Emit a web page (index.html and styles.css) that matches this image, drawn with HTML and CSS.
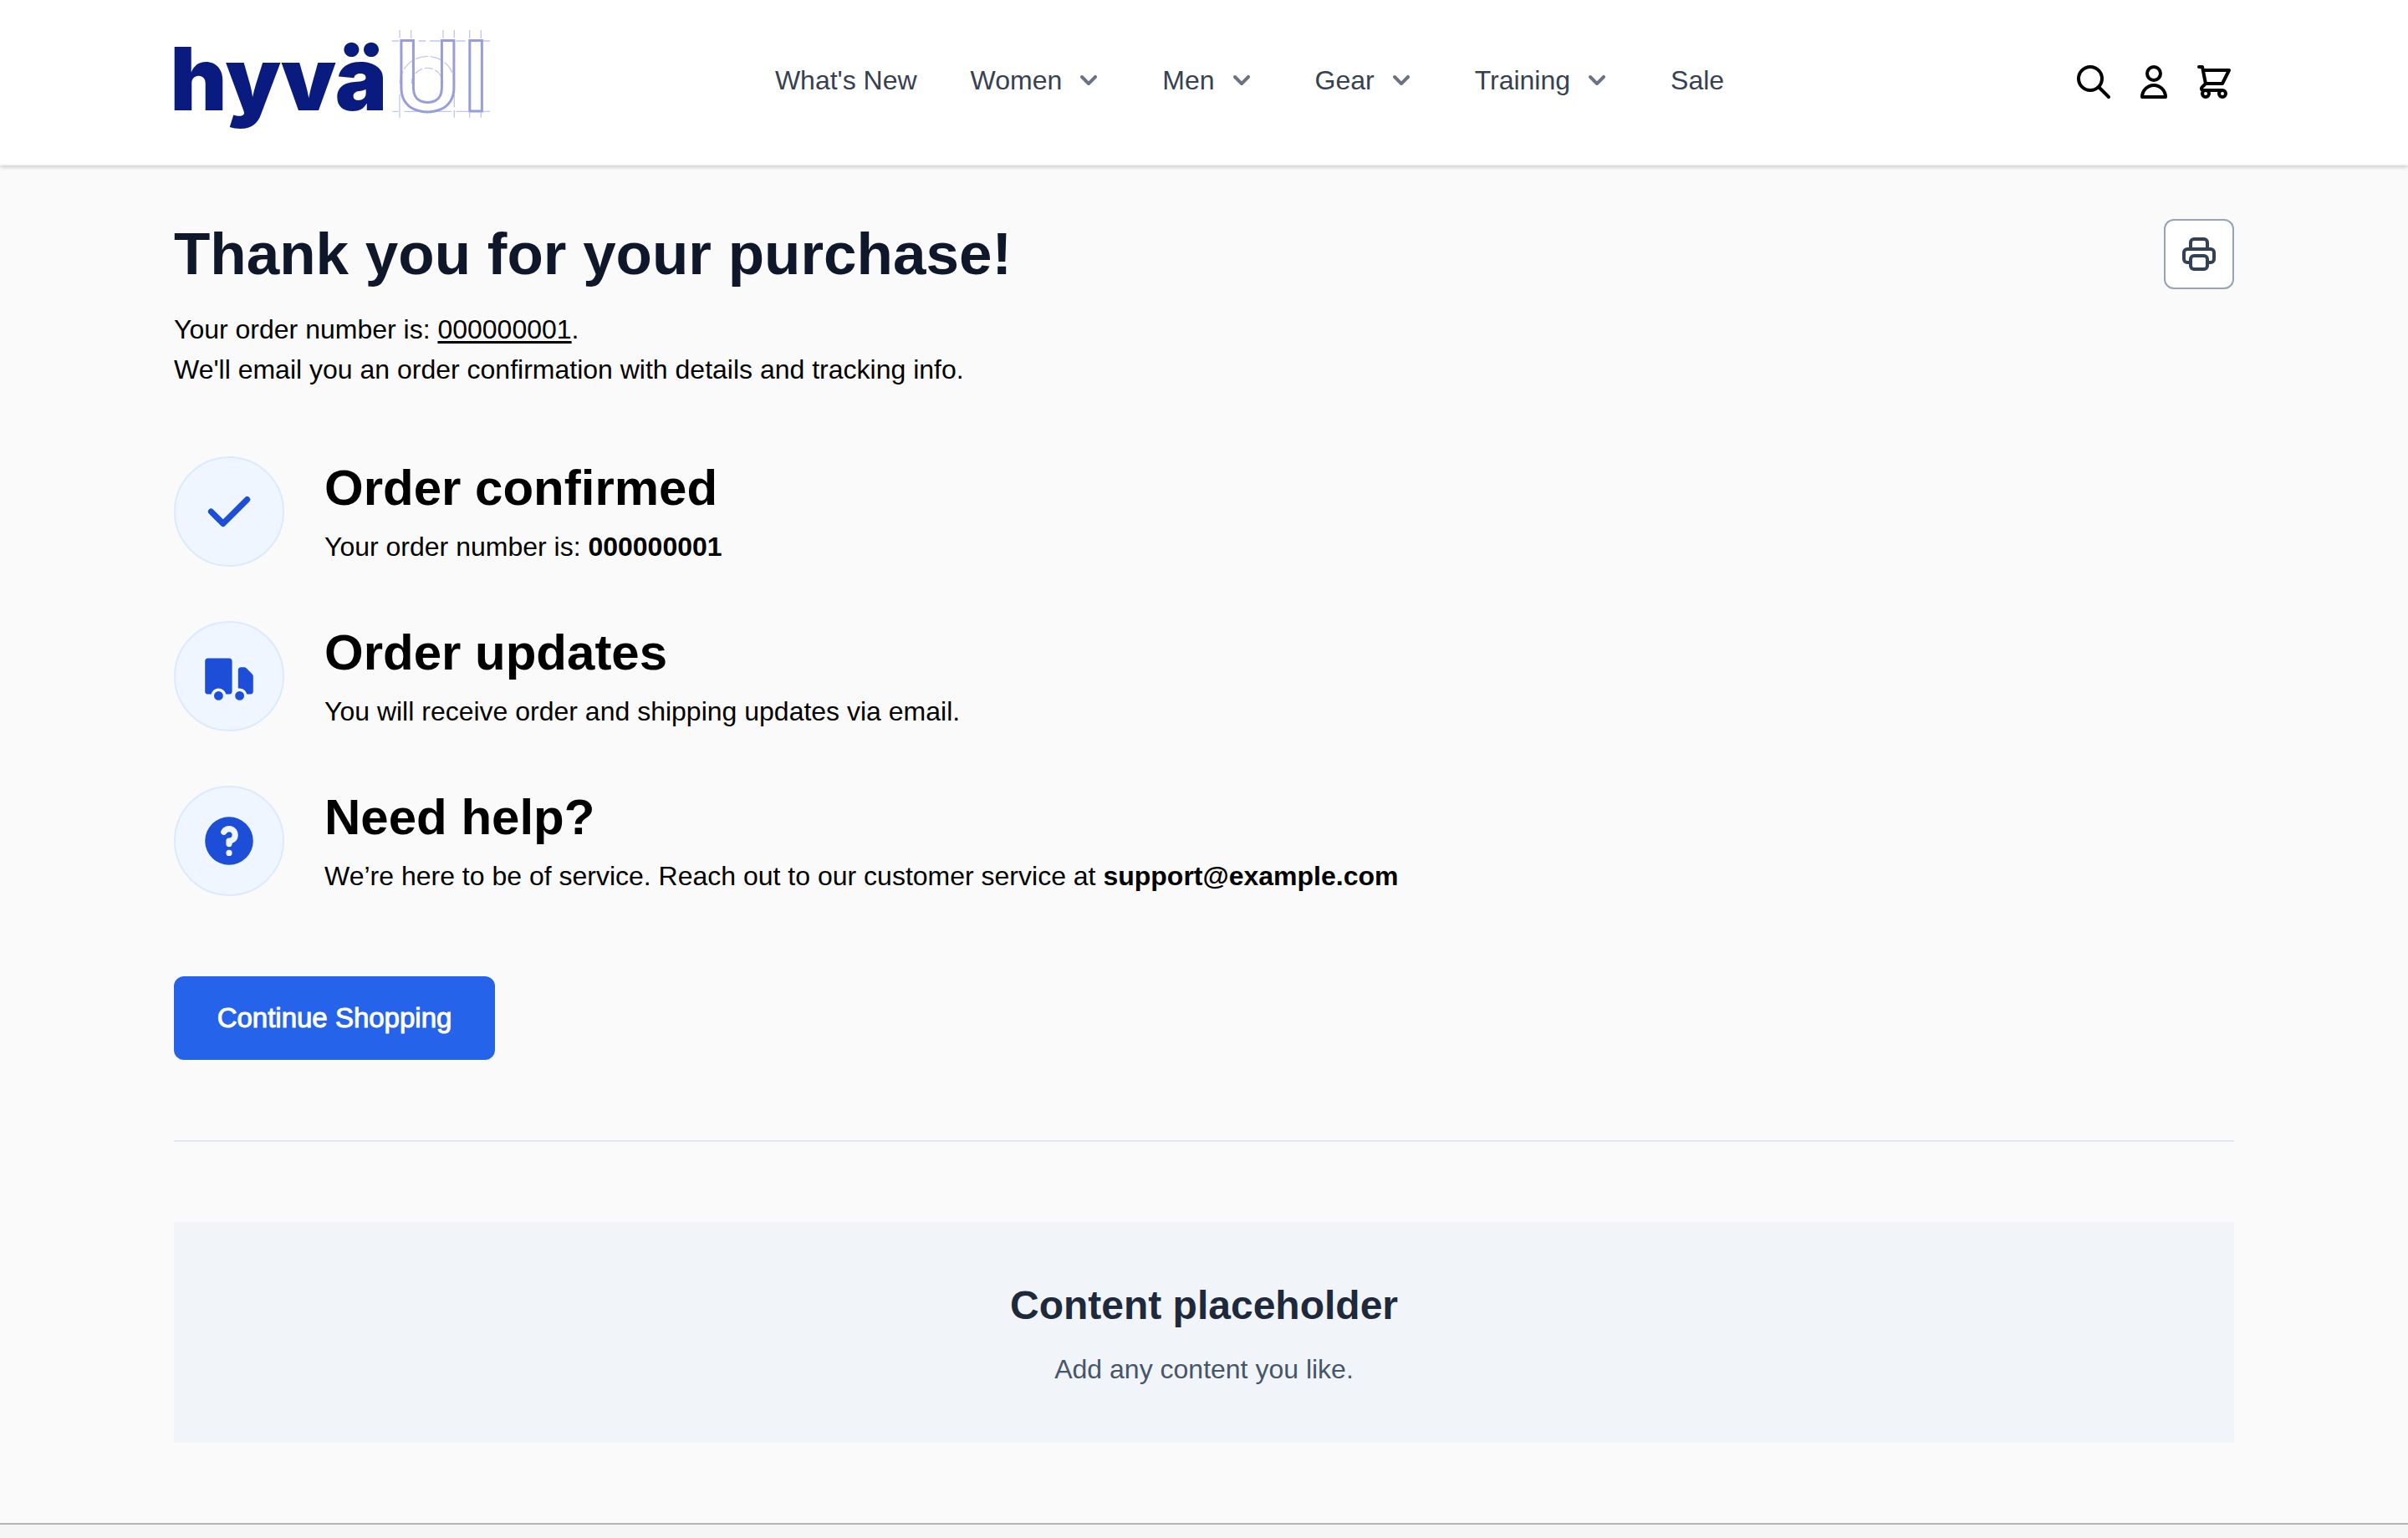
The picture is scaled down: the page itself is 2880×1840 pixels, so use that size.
FILE: index.html
```html
<!DOCTYPE html>
<html lang="en">
<head>
  <meta charset="utf-8">
  <meta name="viewport" content="width=device-width, initial-scale=1">
  <title>Thank you for your purchase!</title>
  <link rel="stylesheet" href="styles.css">
</head>
<body>
  <header class="site-header">
    <div class="container header-row">
      <a class="logo-link" href="#" aria-label="Hyvä UI home">
        <svg class="logo" viewBox="54 45 1134 378">
          <text class="logo-word" x="430" y="335">hyvä</text>
          <g class="logo-guides">
            <path d="M836 87H862M932 87H957M972 87H1010M1066 87H1100M1160 87H1188"/>
            <path d="M838 340H860M880 340H925M1000 340H1050M1066 340H1110M1160 340H1188"/>
            <path d="M864 48V76M905 48V78M1020 48V78M1060 48V76M1115 48V78M1156 48V78"/>
            <path d="M864 278V362M1060 278V325M1060 335V362M1115 345V362M1156 345V362"/>
            <path stroke-dasharray="46 9" d="M865 240A98 98 0 0 1 1061 240"/>
            <path stroke-dasharray="30 9" d="M907 240A56 56 0 0 1 1019 240"/>
          </g>
          <text class="logo-outline" x="964" y="340">U</text>
          <text class="logo-outline" x="1137" y="340">I</text>
        </svg>
      </a>
      <nav class="main-nav" aria-label="Main">
        <a href="#">What's New</a>
        <a href="#">Women <svg class="chevron" viewBox="0 0 20 20"><path d="M5.293 7.293a1 1 0 011.414 0L10 10.586l3.293-3.293a1 1 0 111.414 1.414l-4 4a1 1 0 01-1.414 0l-4-4a1 1 0 010-1.414z"/></svg></a>
        <a href="#">Men <svg class="chevron" viewBox="0 0 20 20"><path d="M5.293 7.293a1 1 0 011.414 0L10 10.586l3.293-3.293a1 1 0 111.414 1.414l-4 4a1 1 0 01-1.414 0l-4-4a1 1 0 010-1.414z"/></svg></a>
        <a href="#">Gear <svg class="chevron" viewBox="0 0 20 20"><path d="M5.293 7.293a1 1 0 011.414 0L10 10.586l3.293-3.293a1 1 0 111.414 1.414l-4 4a1 1 0 01-1.414 0l-4-4a1 1 0 010-1.414z"/></svg></a>
        <a href="#">Training <svg class="chevron" viewBox="0 0 20 20"><path d="M5.293 7.293a1 1 0 011.414 0L10 10.586l3.293-3.293a1 1 0 111.414 1.414l-4 4a1 1 0 01-1.414 0l-4-4a1 1 0 010-1.414z"/></svg></a>
        <a href="#">Sale</a>
      </nav>
      <div class="header-actions">
        <button type="button" aria-label="Search"><svg class="icon-line" viewBox="0 0 24 24"><path d="M21 21l-6-6m2-5a7 7 0 11-14 0 7 7 0 0114 0z"/></svg></button>
        <button type="button" aria-label="My account"><svg class="icon-line" viewBox="0 0 24 24"><path d="M16 7a4 4 0 11-8 0 4 4 0 018 0zM12 14a7 7 0 00-7 7h14a7 7 0 00-7-7z"/></svg></button>
        <button type="button" aria-label="Cart"><svg class="icon-line" viewBox="0 0 24 24"><path d="M3 3h2l.4 2M7 13h10l4-8H5.4M7 13L5.4 5M7 13l-2.293 2.293c-.63.63-.184 1.707.707 1.707H17m0 0a2 2 0 100 4 2 2 0 000-4zm-8 2a2 2 0 11-4 0 2 2 0 014 0z"/></svg></button>
      </div>
    </div>
  </header>

  <main class="container page">
    <div class="title-row">
      <h1>Thank you for your purchase!</h1>
      <button class="print-button" type="button" aria-label="Print receipt">
        <svg class="icon-line" viewBox="0 0 24 24"><path d="M17 17h2a2 2 0 002-2v-4a2 2 0 00-2-2H5a2 2 0 00-2 2v4a2 2 0 002 2h2m2 4h6a2 2 0 002-2v-4a2 2 0 00-2-2H9a2 2 0 00-2 2v4a2 2 0 002 2zm8-12V5a2 2 0 00-2-2H9a2 2 0 00-2 2v4h10z"/></svg>
      </button>
    </div>
    <div class="intro">
      <p>Your order number is: <a href="#">000000001</a>.</p>
      <p>We'll email you an order confirmation with details and tracking info.</p>
    </div>

    <ul class="steps">
      <li class="step">
        <span class="badge"><svg viewBox="0 0 20 20"><path d="M16.707 5.293a1 1 0 010 1.414l-8 8a1 1 0 01-1.414 0l-4-4a1 1 0 011.414-1.414L8 12.586l7.293-7.293a1 1 0 011.414 0z"/></svg></span>
        <div>
          <h2>Order confirmed</h2>
          <p>Your order number is: <strong>000000001</strong></p>
        </div>
      </li>
      <li class="step">
        <span class="badge"><svg viewBox="0 0 20 20"><path d="M8 16.5a1.5 1.5 0 11-3 0 1.5 1.5 0 013 0zM15 16.5a1.5 1.5 0 11-3 0 1.5 1.5 0 013 0z"/><path d="M3 4a1 1 0 00-1 1v10a1 1 0 001 1h1.05a2.5 2.5 0 014.9 0H10a1 1 0 001-1V5a1 1 0 00-1-1H3zM14 7a1 1 0 00-1 1v6.05A2.5 2.5 0 0115.95 16H17a1 1 0 001-1v-5a1 1 0 00-.293-.707l-2-2A1 1 0 0015 7h-1z"/></svg></span>
        <div>
          <h2>Order updates</h2>
          <p>You will receive order and shipping updates via email.</p>
        </div>
      </li>
      <li class="step">
        <span class="badge"><svg viewBox="0 0 20 20"><path fill-rule="evenodd" d="M18 10a8 8 0 11-16 0 8 8 0 0116 0zm-8-3a1 1 0 00-.867.5 1 1 0 11-1.731-1A3 3 0 0113 8a3.001 3.001 0 01-2 2.83V11a1 1 0 11-2 0v-1a1 1 0 011-1 1 1 0 100-2zm0 8a1 1 0 100-2 1 1 0 000 2z"/></svg></span>
        <div>
          <h2>Need help?</h2>
          <p>We’re here to be of service. Reach out to our customer service at <strong>support@example.com</strong></p>
        </div>
      </li>
    </ul>

    <a class="primary-button" href="#">Continue Shopping</a>

    <hr class="divider">

    <section class="placeholder">
      <h2>Content placeholder</h2>
      <p>Add any content you like.</p>
    </section>
  </main>

  <footer class="site-footer"></footer>
</body>
</html>
```
FILE: styles.css
```css
* {
  box-sizing: border-box;
}

body {
  min-height: 100vh;
  margin: 0;
  display: flex;
  flex-direction: column;
  background: #fafafa;
  color: #000;
  font-family: "Liberation Sans", Arial, sans-serif;
  font-size: 32px;
  line-height: 48px;
}

h1, h2, p, ul {
  margin: 0;
  padding: 0;
}

svg {
  display: block;
}

button {
  padding: 0;
  border: 0;
  background: none;
  color: inherit;
  font: inherit;
}

.container {
  width: 100%;
  max-width: 2560px;
  margin: 0 auto;
  padding: 0 48px;
}

/* Header */
.site-header {
  border-bottom: 2px solid #f5f5f5;
  background: #fff;
  box-shadow: 0 2px 6px rgba(0, 0, 0, 0.1), 0 2px 4px rgba(0, 0, 0, 0.1);
}

.header-row {
  display: flex;
  align-items: center;
  padding-top: 35px;
  padding-bottom: 35px;
}

.logo {
  width: 378px;
  height: 126px;
  overflow: visible;
}

.logo-word,
.logo-outline {
  text-anchor: middle;
}

.logo-word {
  fill: #0a1b80;
  font-family: Inter, sans-serif;
  font-size: 314px;
  font-weight: 900;
}

.logo-guides {
  fill: none;
  stroke: #c3c8ea;
  stroke-width: 4px;
}

.logo-outline {
  fill: none;
  stroke: #969fdb;
  stroke-width: 9px;
  font-family: Roboto, sans-serif;
  font-size: 356px;
  font-weight: 500;
}

.main-nav {
  display: flex;
  gap: 64px;
  margin: 0 auto;
  padding: 0 77px 4px 0;
}

.main-nav a {
  display: flex;
  align-items: center;
  color: #374151;
  text-decoration: none;
}

.chevron {
  width: 40px;
  height: 40px;
  margin: 0 4px 0 12px;
  fill: #6b7280;
}

.header-actions {
  display: flex;
  gap: 24px;
}

.icon-line {
  width: 48px;
  height: 48px;
  fill: none;
  stroke: currentColor;
  stroke-width: 2;
  stroke-linecap: round;
  stroke-linejoin: round;
}

/* Order summary */
.page {
  padding-top: 64px;
  padding-bottom: 96px;
}

.title-row {
  display: flex;
  align-items: center;
  justify-content: space-between;
}

h1 {
  color: #0f172a;
  font-size: 71px;
  line-height: 80px;
}

.print-button {
  padding: 16px;
  border: 2px solid #94a3b8;
  border-radius: 12px;
  background: #fff;
  color: #334155;
}

.intro {
  margin-top: 24px;
}

.intro a {
  color: inherit;
  text-underline-offset: 3px;
}

.steps {
  display: grid;
  gap: 65px;
  margin-top: 80px;
  list-style: none;
}

.step {
  display: flex;
  align-items: center;
  gap: 48px;
}

.badge {
  padding: 28px;
  border: 2px solid #dbeafe;
  border-radius: 50%;
  background: #eff6ff;
}

.badge svg {
  width: 72px;
  height: 72px;
  fill: #1d4ed8;
}

.step h2 {
  margin-bottom: 8px;
  font-size: 60px;
  line-height: 76px;
}

.primary-button {
  display: inline-block;
  min-width: 384px;
  margin-top: 96px;
  padding: 26px 48px;
  border-radius: 12px;
  background: #2563eb;
  color: #fff;
  font-size: 33px;
  text-align: center;
  text-decoration: none;
  -webkit-text-stroke: 1px currentColor;
}

.divider {
  height: 2px;
  margin: 96px 0;
  border: 0;
  background: #e2e8f0;
}

.placeholder {
  padding: 64px 48px;
  background: #f1f5f9;
  color: #475569;
  text-align: center;
}

.placeholder h2 {
  margin-bottom: 16px;
  color: #1e293b;
  font-size: 48px;
  line-height: 72px;
}

.site-footer {
  flex: 1;
  border-top: 2px solid #b3b3b3;
  background: #f5f5f5;
}
```
